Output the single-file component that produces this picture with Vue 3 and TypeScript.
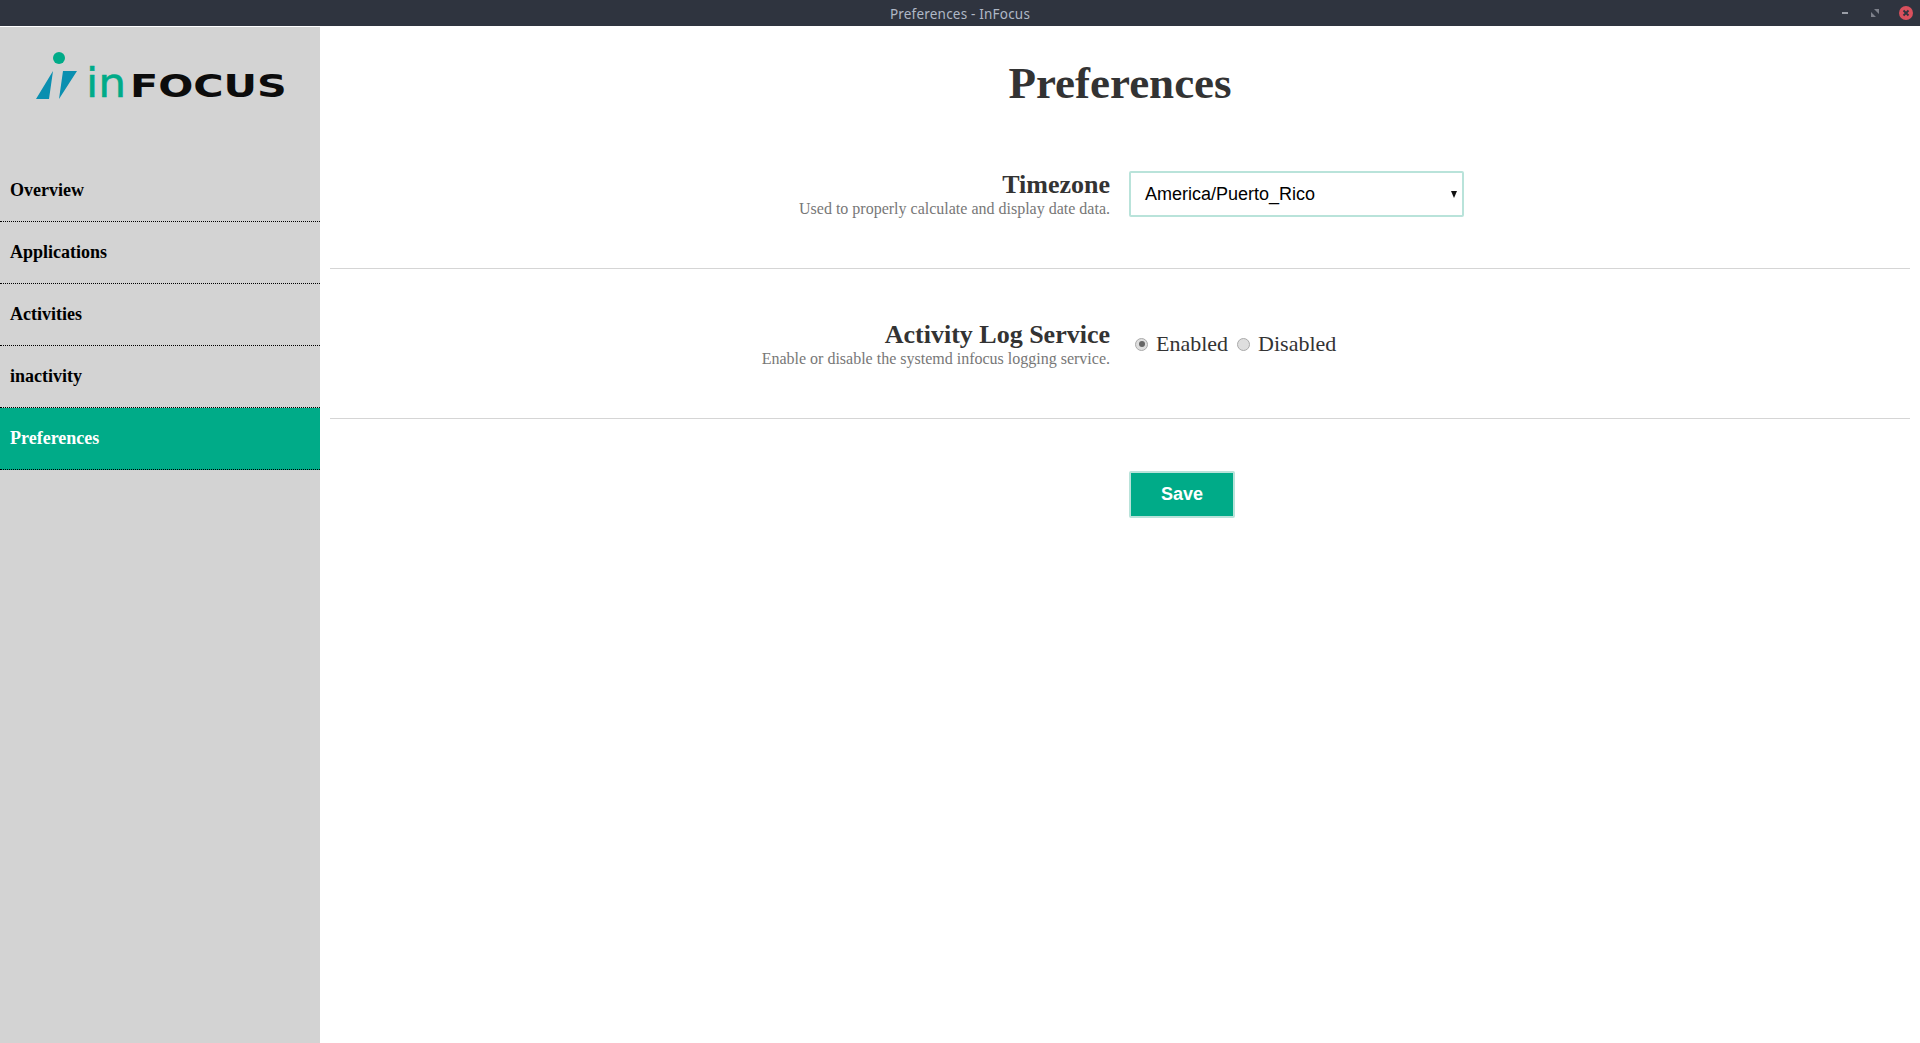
<template>
  <div class="window">
    <header class="titlebar">
      <span class="wintitle">Preferences - InFocus</span>
      <div class="winbtns">
        <span class="minbtn"></span>
        <svg class="maxbtn" width="8" height="8" viewBox="0 0 8 8">
          <path d="M3 0h5v5zM0 3l5 5H0z" fill="#7d808a" />
        </svg>
        <svg class="closebtn" width="14" height="14" viewBox="0 0 14 14">
          <circle cx="7" cy="7" r="7" fill="#d9505d" />
          <path d="M4.5 4.5l5 5M9.5 4.5l-5 5" stroke="#2f343f" stroke-width="1.8" />
        </svg>
      </div>
    </header>
    <div class="body">
      <aside class="sidebar">
        <div class="logo">
          <svg class="logomark" width="44" height="50" viewBox="0 0 44 50">
            <circle cx="24" cy="6" r="6" fill="#00ab88" />
            <path d="M1 47 18 19l-4 28zM28 19h14L24 47z" fill="#0a8fb0" />
          </svg>
          <span class="wordmark"><span class="in">in</span><span class="focus">FOCUS</span></span>
        </div>
        <nav>
          <a
            v-for="item in navItems"
            :key="item"
            :class="['navitem', { active: item === 'Preferences' }]"
          >{{ item }}</a>
        </nav>
      </aside>
      <main class="content">
        <h1>Preferences</h1>
        <section class="row tzrow">
          <div class="label">
            <h2>Timezone</h2>
            <p>Used to properly calculate and display date data.</p>
          </div>
          <div class="field">
            <div class="select">
              <span>America/Puerto_Rico</span>
              <span class="caret"></span>
            </div>
          </div>
        </section>
        <section class="row logrow">
          <div class="label">
            <h2>Activity Log Service</h2>
            <p>Enable or disable the systemd infocus logging service.</p>
          </div>
          <div class="field radios">
            <span class="radio checked"></span><span class="radiotext">Enabled</span>
            <span class="radio"></span><span class="radiotext">Disabled</span>
          </div>
        </section>
        <div class="actions">
          <button class="save">Save</button>
        </div>
      </main>
    </div>
  </div>
</template>

<script setup lang="ts">
const navItems: string[] = ['Overview', 'Applications', 'Activities', 'inactivity', 'Preferences']
</script>

<style>
html,
body {
  margin: 0;
  background: #fff;
}
</style>

<style scoped>
.window {
  width: 1920px;
  height: 1043px;
  display: flex;
  flex-direction: column;
  overflow: hidden;
  font-family: 'Liberation Serif', 'Times New Roman', serif;
  background: #fff;
}
.titlebar {
  height: 26px;
  flex-shrink: 0;
  background: #2f343f;
  position: relative;
  display: flex;
  align-items: center;
  justify-content: center;
}
.wintitle {
  font-family: 'Noto Sans', sans-serif;
  font-size: 13.5px;
  letter-spacing: 0.2px;
  color: #afb8c6;
  padding-top: 1px;
}
.winbtns {
  position: absolute;
  right: 0;
  top: 0;
  height: 26px;
}
.minbtn {
  position: absolute;
  right: 72px;
  top: 12px;
  width: 6px;
  height: 2px;
  background: #9a9da6;
}
.maxbtn {
  position: absolute;
  right: 41px;
  top: 9px;
}
.closebtn {
  position: absolute;
  right: 7px;
  top: 6px;
}
.body {
  flex: 1;
  display: flex;
  margin-top: 1px;
  min-height: 0;
}
.sidebar {
  width: 320px;
  flex-shrink: 0;
  background: #d3d3d3;
}
.logo {
  height: 133px;
  position: relative;
}
.logomark {
  position: absolute;
  left: 35px;
  top: 25px;
}
.wordmark {
  position: absolute;
  left: 86px;
  top: 31px;
  font-family: 'DejaVu Sans', sans-serif;
  font-size: 40px;
  line-height: 50px;
  white-space: nowrap;
}
.in {
  display: inline-block;
  width: 44px;
  color: #00ab88;
  -webkit-text-stroke: 0.5px #00ab88;
  transform: scaleX(1.1);
  transform-origin: left center;
}
.focus {
  display: inline-block;
  font-size: 32px;
  font-weight: 700;
  color: #0c0c0c;
  transform: scaleX(1.29);
  transform-origin: left center;
}
nav {
  display: flex;
  flex-direction: column;
}
.navitem {
  height: 61px;
  border-bottom: 1px dotted #000;
  display: flex;
  align-items: center;
  padding-left: 10px;
  font-size: 18px;
  font-weight: 700;
  color: #000;
}
.navitem.active {
  background: #00ab88;
  color: #fff;
}
.content {
  flex: 1;
  padding: 0 10px;
  min-width: 0;
}
h1 {
  margin: 0;
  padding-top: 30px;
  height: 119px;
  box-sizing: border-box;
  font-size: 45px;
  line-height: 52px;
  font-weight: 700;
  text-align: center;
  color: #333;
}
.row {
  display: flex;
  gap: 19px;
  height: 150px;
  box-sizing: border-box;
  padding-top: 52px;
  border-bottom: 1px solid #d5d5d5;
}
.tzrow {
  height: 123px;
  padding-top: 25px;
}
.label {
  width: 780px;
  text-align: right;
  flex-shrink: 0;
}
h2 {
  margin: 0;
  font-size: 26px;
  line-height: 28px;
  font-weight: 700;
  color: #333;
}
p {
  margin: 0;
  font-size: 16px;
  line-height: 20px;
  color: #777;
}
.select {
  width: 335px;
  height: 46px;
  box-sizing: border-box;
  border: 2px solid #b9e3da;
  border-radius: 2px;
  display: flex;
  align-items: center;
  justify-content: space-between;
  padding: 0 5px 0 14px;
  font-family: 'Liberation Sans', Arial, sans-serif;
  font-size: 18px;
  color: #000;
}
.caret {
  width: 0;
  height: 0;
  border-left: 3px solid transparent;
  border-right: 3px solid transparent;
  border-top: 7px solid #111;
}
.radios {
  display: flex;
  align-items: center;
  height: 46px;
  font-size: 22px;
  color: #333;
}
.radio {
  width: 13px;
  height: 13px;
  border-radius: 50%;
  box-sizing: border-box;
  border: 1px solid #aaa;
  background: #dedede;
  margin: 0 8px 0 5px;
  flex-shrink: 0;
  position: relative;
}
.radio.checked {
  margin-left: 6px;
}
.radio.checked::after {
  content: '';
  position: absolute;
  left: 2.5px;
  top: 2.5px;
  width: 6px;
  height: 6px;
  border-radius: 50%;
  background: #666;
}
.radiotext {
  margin-right: 4px;
}
.actions {
  padding: 52px 0 0 799px;
}
.save {
  width: 106px;
  height: 47px;
  box-sizing: border-box;
  border: 2px solid #b9e3da;
  border-radius: 2px;
  background: #00ab88;
  color: #fff;
  font-family: 'Liberation Sans', Arial, sans-serif;
  font-size: 18px;
  font-weight: 700;
  padding: 0;
}
</style>
